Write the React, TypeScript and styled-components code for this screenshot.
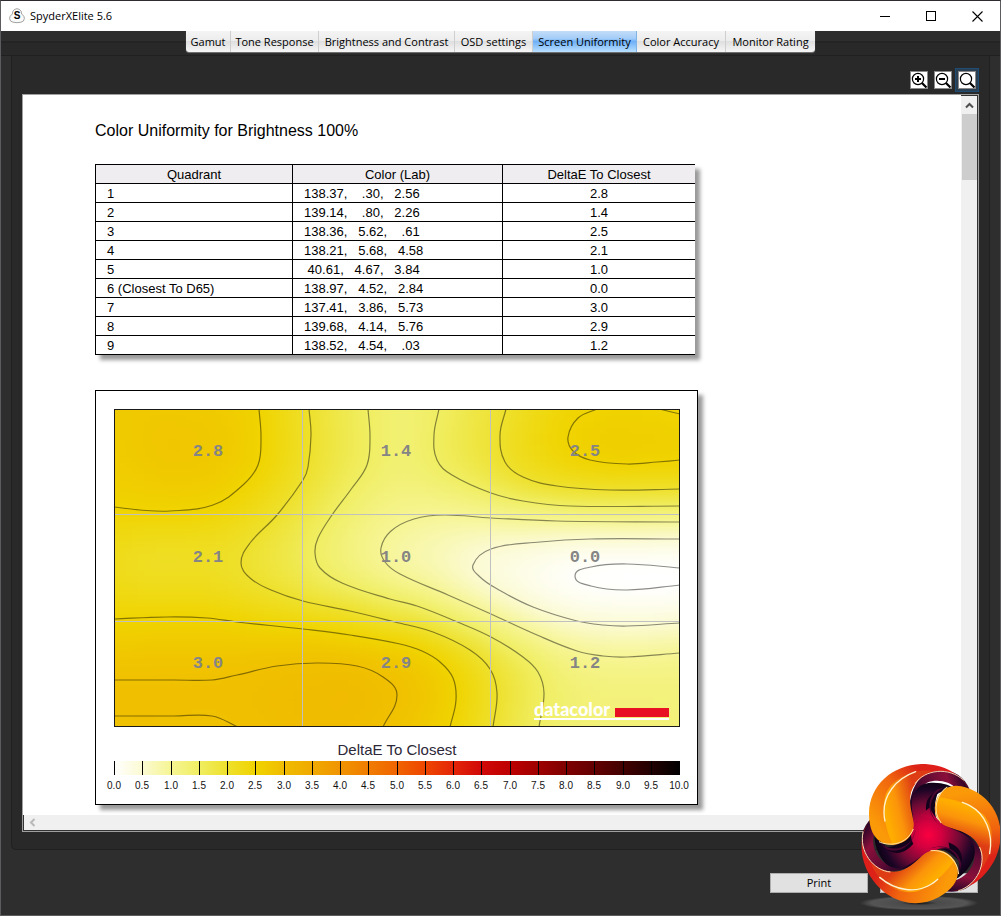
import React from "react";
import styled, { createGlobalStyle, css } from "styled-components";

const GlobalStyle = createGlobalStyle`
  *, *::before, *::after { box-sizing: border-box; }
  html, body { margin: 0; padding: 0; background: #2e2e2e; }
  button { font: inherit; color: inherit; padding: 0; margin: 0; cursor: default; }
`;

const uiFont = `"Open Sans", "Noto Sans", sans-serif`;
const docFont = `"Liberation Sans", Arial, sans-serif`;

/* ---------- window frame ---------- */

const Window = styled.div`
  position: relative;
  display: flex;
  flex-direction: column;
  min-height: 100vh;
  background: #2e2e2e;
  border: 1px solid #5c5c5e;
  border-top-color: #2f2b31;
  font-family: ${uiFont};
  font-size: 11px;
  color: #000;
  overflow: hidden;
`;

const TitleBar = styled.header`
  display: flex;
  align-items: center;
  height: 30px;
  padding-left: 8px;
  background: #fff;
`;

const AppName = styled.h1`
  flex: 1;
  margin: 0 0 0 5px;
  font-size: 11px;
  line-height: 16px;
  font-weight: 400;
`;

const CaptionButton = styled.button`
  display: flex;
  align-items: center;
  justify-content: center;
  width: 46px;
  height: 30px;
  border: 0;
  background: transparent;
`;

/* ---------- tabs ---------- */

const TabStrip = styled.nav`
  display: flex;
  justify-content: center;
  align-items: flex-start;
  height: 25px;
  background: linear-gradient(#2e2e2e 10px, #242424 10px, #242424 12px, #292929 12px, #292929 24px, #202020 24px);
`;

const TabGroup = styled.div`
  display: flex;
  height: 21px;
  border-radius: 0 0 3px 3px;
  overflow: hidden;
  box-shadow: 0 1px 1px #777;
`;

const Tab = styled.button<{ $width: number; $active?: boolean }>`
  width: ${(p) => p.$width}px;
  height: 21px;
  border: 0;
  border-right: 1px solid #cfcfcf;
  background: linear-gradient(#f4f4f4, #ededed 45%, #dfdfe0 50%, #f6f6f6);
  line-height: 21px;
  white-space: nowrap;
  &:last-child { border-right: 0; }
  ${(p) =>
    p.$active &&
    css`
      border-right-color: #7fb4e8;
      background: linear-gradient(#c3ddf8, #a5cdf8 35%, #6fb0f7 50%, #b9e0ff);
    `}
`;

/* ---------- report panel ---------- */

const Panel = styled.main`
  flex: 1;
  display: flex;
  flex-direction: column;
  margin: 0 10px;
  padding: 12px 10px 17px;
  background: #292929;
  border: 1px solid #202020;
  border-top: 0;
  border-radius: 0 0 5px 5px;
`;

const ZoomBar = styled.div`
  display: flex;
  justify-content: flex-end;
  height: 26px;
`;

const ZoomButton = styled.button<{ $active?: boolean }>`
  display: flex;
  align-items: center;
  justify-content: center;
  width: 24px;
  height: 24px;
  border: 1px solid ${(p) => (p.$active ? "#1f4c74" : "transparent")};
  background: ${(p) => (p.$active ? "#2b3f52" : "transparent")};
`;

const Viewport = styled.section`
  flex: 1;
  display: grid;
  grid-template-columns: 1fr 17px;
  grid-template-rows: 1fr 16px;
  border: 1px solid #a0a0a0;
  background: #fff;
`;

const Page = styled.article`
  padding: 26px 72px 9px;
  font-family: ${docFont};
  overflow: hidden;
`;

const VerticalScroll = styled.div`
  display: flex;
  flex-direction: column;
  align-items: center;
  background: #f0f0f0;
  border-top: 1px solid #333;
  border-right: 1px solid #333;
`;

const HorizontalScroll = styled.div`
  grid-column: 1 / -1;
  display: flex;
  align-items: center;
  padding-left: 5px;
  background: #f0f0f0;
  border: 1px solid #333;
  border-top: 0;
`;

const ScrollArrow = styled.div`
  display: flex;
  align-items: center;
  justify-content: center;
  height: 18px;
`;

const ScrollThumb = styled.div`
  align-self: stretch;
  height: 66px;
  margin-left: 1px;
  background: #cdcdcd;
`;

const Heading = styled.h2`
  margin: 0 0 23px;
  font-size: 16px;
  line-height: 20px;
  font-weight: 400;
`;

const ResultTable = styled.table`
  width: 100%;
  max-width: 600px;
  margin-bottom: 35px;
  table-layout: fixed;
  border-collapse: separate;
  border-spacing: 0;
  border-top: 1px solid #000;
  border-left: 1px solid #000;
  box-shadow: 5px 5px 4px rgba(0, 0, 0, 0.4);
  font-size: 13px;
  line-height: 17px;
`;

const Column = styled.col<{ $width: number }>`
  width: ${(p) => p.$width}px;
`;

const HeadCell = styled.th`
  padding: 1px 0 0;
  border-bottom: 1px solid #000;
  border-right: 1px solid #000;
  background: #efedef;
  font-weight: 400;
  &:last-child { border-right: 0; }
`;

const Cell = styled.td<{ $center?: boolean }>`
  padding: 1px 0 0 ${(p) => (p.$center ? 0 : 11)}px;
  border-bottom: 1px solid #000;
  border-right: 1px solid #000;
  background: #fff;
  text-align: ${(p) => (p.$center ? "center" : "left")};
  white-space: pre;
  &:last-child { border-right: 0; }
`;

const ChartCard = styled.figure`
  max-width: 603px;
  margin: 0;
  padding: 18px 17px 9px 18px;
  background: #fff;
  border: 1px solid #000;
  box-shadow: 5px 5px 4px rgba(0, 0, 0, 0.4);
`;

const ChartSvg = styled.svg`
  display: block;
  width: 100%;
  height: auto;
  overflow: visible;
`;

const LegendTitle = styled.figcaption`
  margin: 13px 0 1px;
  font-size: 15px;
  line-height: 20px;
  color: #2c2838;
  text-align: center;
`;

/* ---------- footer ---------- */

const Footer = styled.footer`
  display: flex;
  justify-content: flex-end;
  gap: 12px;
  padding: 23px 22px 22px;
`;

const ActionButton = styled.button`
  width: 98px;
  height: 20px;
  border: 1px solid #adadad;
  background: #e1e1e1;
  line-height: 18px;
`;

const Emblem = styled.svg`
  position: absolute;
  right: 0;
  bottom: 5px;
  width: 151px;
  height: 155px;
  pointer-events: none;
`;

/* ---------- data ---------- */

const tabs = [
  { label: "Gamut", width: 45 },
  { label: "Tone Response", width: 88 },
  { label: "Brightness and Contrast", width: 136 },
  { label: "OSD settings", width: 78 },
  { label: "Screen Uniformity", width: 104 },
  { label: "Color Accuracy", width: 89 },
  { label: "Monitor Rating", width: 89 },
];

const rows = [
  ["1", "138.37,    .30,   2.56", "2.8"],
  ["2", "139.14,    .80,   2.26", "1.4"],
  ["3", "138.36,   5.62,    .61", "2.5"],
  ["4", "138.21,   5.68,   4.58", "2.1"],
  ["5", " 40.61,   4.67,   3.84", "1.0"],
  ["6 (Closest To D65)", "138.97,   4.52,   2.84", "0.0"],
  ["7", "137.41,   3.86,   5.73", "3.0"],
  ["8", "139.68,   4.14,   5.76", "2.9"],
  ["9", "138.52,   4.54,    .03", "1.2"],
];

type Point = [number, number];
type Contour = { level: number; points: Point[] };

const W = 566;
const H = 318;

const contours: Contour[] = [
  { level: 2.5, points: [[145, 0], [147, 29], [144, 56], [129, 76], [99, 96], [56, 102], [26, 101], [0, 98]] },
  {
    level: 2,
    points: [[195, 0], [197, 26], [194, 58], [189, 71], [163, 106], [136, 134], [127, 154], [136, 169], [157, 181], [189, 192], [236, 202], [281, 213], [319, 223], [356, 241], [376, 260], [383, 284], [379, 318]],
  },
  {
    level: 1.5,
    points: [[254, 0], [256, 29], [253, 56], [238, 79], [218, 106], [204, 129], [201, 144], [206, 159], [228, 174], [276, 190], [303, 197], [341, 212], [377, 228], [409, 248], [424, 263], [430, 284], [425, 318]],
  },
  { level: 1.5, points: [[325, 0], [320, 26], [323, 51], [338, 66], [377, 84], [409, 92], [456, 97], [566, 97]] },
  { level: 2, points: [[392, 0], [386, 26], [391, 53], [409, 68], [443, 77], [496, 81], [566, 80]] },
  { level: 2.5, points: [[483, 0], [464, 9], [454, 28], [459, 42], [476, 51], [513, 55], [543, 53], [566, 51]] },
  { level: 2.5, points: [[545, 0], [566, 5]] },
  {
    level: 1,
    points: [[566, 113], [443, 112], [377, 109], [330, 106], [300, 110], [277, 122], [267, 139], [271, 153], [286, 165], [334, 186], [377, 205], [423, 226], [463, 242], [489, 247], [513, 248], [566, 244]],
  },
  {
    level: 0.5,
    points: [[566, 130], [476, 130], [426, 133], [377, 140], [359, 156], [366, 168], [385, 181], [419, 198], [463, 212], [489, 216], [513, 217], [566, 214]],
  },
  { level: 0.05, points: [[566, 159], [513, 155], [477, 158], [461, 167], [477, 177], [513, 181], [566, 176]] },
  {
    level: 2.5,
    points: [[0, 210], [53, 208], [93, 209], [123, 213], [189, 220], [236, 226], [286, 235], [308, 242], [326, 253], [339, 269], [342, 291], [336, 318]],
  },
  { level: 2.9, points: [[0, 271], [60, 271], [98, 271], [123, 266], [163, 257], [203, 254], [243, 257], [269, 268], [283, 286], [269, 318]] },
  { level: 2.9, points: [[0, 307], [60, 307], [98, 307], [124, 318]] },
];

const peaks: [number, number, number][] = [
  [94, 42, 2.75], [50, 30, 2.78], [10, 30, 2.7], [70, 0, 2.72],
  [94, 148, 2.1], [20, 150, 2.15], [50, 150, 2.1],
  [285, 42, 1.35], [288, 10, 1.35],
  [520, 25, 2.6], [60, 289, 2.93], [200, 290, 3], [230, 310, 3],
  [520, 290, 1.25], [560, 300, 1.25], [480, 300, 1.28], [520, 168, 0],
];

const quadrants = [
  { x: 94, y: 47, text: "2.8" },
  { x: 282, y: 47, text: "1.4" },
  { x: 471, y: 47, text: "2.5" },
  { x: 94, y: 153, text: "2.1" },
  { x: 282, y: 153, text: "1.0" },
  { x: 471, y: 153, text: "0.0" },
  { x: 94, y: 259, text: "3.0" },
  { x: 282, y: 259, text: "2.9" },
  { x: 471, y: 259, text: "1.2" },
];

/* One colour for each half step of DeltaE, 0.0 to 10.0. */
const scale: [number, number, number][] = [
  [255, 255, 255], [251, 250, 210], [246, 245, 148], [240, 238, 98], [238, 224, 44], [240, 212, 0],
  [240, 188, 0], [240, 170, 0], [240, 148, 0], [240, 124, 0], [240, 100, 0], [238, 70, 0],
  [228, 38, 8], [208, 8, 8], [190, 0, 0], [158, 0, 0], [126, 0, 0], [98, 0, 0],
  [66, 0, 0], [34, 0, 0], [0, 0, 0],
];

function colorFor(value: number): string {
  const t = Math.min(19.999, Math.max(0, value * 2));
  const i = Math.floor(t);
  const f = t - i;
  const c = scale[i].map((a, k) => Math.round(a + (scale[i + 1][k] - a) * f));
  return `rgb(${c.join(",")})`;
}

/* Smooth curve through all points of a contour. */
function curve(points: Point[]): string {
  const at = (i: number) => points[Math.max(0, Math.min(points.length - 1, i))];
  const tangent = (a: Point, c: Point): Point => {
    const l = Math.hypot(c[0] - a[0], c[1] - a[1]) || 1;
    return [(c[0] - a[0]) / l, (c[1] - a[1]) / l];
  };
  let d = `M${points[0][0]} ${points[0][1]}`;
  for (let i = 0; i < points.length - 1; i++) {
    const [a, b, c, e] = [at(i - 1), at(i), at(i + 1), at(i + 2)];
    const seg = Math.hypot(c[0] - b[0], c[1] - b[1]) * 0.38;
    const t1 = tangent(a, c);
    const t2 = tangent(b, e);
    d += `C${(b[0] + t1[0] * seg).toFixed(1)} ${(b[1] + t1[1] * seg).toFixed(1)} ${(c[0] - t2[0] * seg).toFixed(1)} ${(c[1] - t2[1] * seg).toFixed(1)} ${c[0]} ${c[1]}`;
  }
  return d;
}

/* Thin-plate spline through the contour points and the peaks. */
function buildField(): (x: number, y: number) => number {
  const s = 100;
  const samples = [
    ...contours.flatMap((c) => c.points.map(([x, y]) => [x / s, y / s, c.level])),
    ...peaks.map(([x, y, v]) => [x / s, y / s, v]),
  ];
  const n = samples.length;
  const kernel = (r2: number) => (r2 < 1e-9 ? 0 : 0.5 * r2 * Math.log(r2));
  const size = n + 3;
  const m: number[][] = Array.from({ length: size }, () => new Array(size + 1).fill(0));
  for (let i = 0; i < n; i++) {
    for (let j = 0; j < n; j++) {
      m[i][j] = kernel((samples[i][0] - samples[j][0]) ** 2 + (samples[i][1] - samples[j][1]) ** 2);
    }
    m[i][i] += 0.004;
    [1, samples[i][0], samples[i][1]].forEach((v, k) => {
      m[i][n + k] = v;
      m[n + k][i] = v;
    });
    m[i][size] = samples[i][2];
  }
  for (let c = 0; c < size; c++) {
    let p = c;
    for (let r = c + 1; r < size; r++) if (Math.abs(m[r][c]) > Math.abs(m[p][c])) p = r;
    [m[c], m[p]] = [m[p], m[c]];
    for (let r = c + 1; r < size; r++) {
      const f = m[r][c] / m[c][c];
      if (f !== 0) for (let k = c; k <= size; k++) m[r][k] -= f * m[c][k];
    }
  }
  const w = new Array(size).fill(0);
  for (let r = size - 1; r >= 0; r--) {
    let v = m[r][size];
    for (let k = r + 1; k < size; k++) v -= m[r][k] * w[k];
    w[r] = v / m[r][r];
  }
  return (px, py) => {
    const x = px / s;
    const y = py / s;
    let v = w[n] + w[n + 1] * x + w[n + 2] * y;
    for (let i = 0; i < n; i++) v += w[i] * kernel((x - samples[i][0]) ** 2 + (y - samples[i][1]) ** 2);
    return v;
  };
}

const CELL = 6;
const field = buildField();
const cells: { x: number; y: number; fill: string }[] = [];
for (let y = -12; y < H + 12; y += CELL) {
  for (let x = -12; x < W + 12; x += CELL) {
    const cx = Math.min(W, Math.max(0, x + CELL / 2));
    const cy = Math.min(H, Math.max(0, y + CELL / 2));
    cells.push({ x, y, fill: colorFor(field(cx, cy)) });
  }
}

/* ---------- drawings ---------- */

const UniformityMap = () => (
  <ChartSvg viewBox={`0 0 ${W} ${H}`} role="img" aria-label="Uniformity map">
    <defs>
      <clipPath id="plot-area">
        <rect width={W} height={H} />
      </clipPath>
      <filter id="soften" x="-5%" y="-5%" width="110%" height="110%" colorInterpolationFilters="sRGB">
        <feGaussianBlur stdDeviation="4" />
      </filter>
    </defs>
    <g clipPath="url(#plot-area)">
      <g filter="url(#soften)" shapeRendering="crispEdges">
        {cells.map((c, i) => (
          <rect key={i} x={c.x} y={c.y} width={CELL} height={CELL} fill={c.fill} />
        ))}
      </g>
      <g fill="none" stroke="#000" strokeOpacity="0.45" strokeWidth="1.2">
        {contours.map((c, i) => (
          <path key={i} d={curve(c.points)} />
        ))}
      </g>
      <path d="M188.5 0V318M376.5 0V318M0 105.5H566M0 212.5H566" stroke="#c0c0c0" fill="none" />
    </g>
    <g fill="#858585" fontFamily={`"Liberation Mono", monospace`} fontWeight="700" fontSize="17" textAnchor="middle">
      {quadrants.map((q) => (
        <text key={q.text} x={q.x} y={q.y}>
          {q.text}
        </text>
      ))}
    </g>
    <text x="420" y="307" fill="#fff" fontFamily="Lato, sans-serif" fontWeight="900" fontSize="18">
      datacolor
    </text>
    <rect x="420" y="309" width="135" height="2" fill="#fff" />
    <rect x="501" y="299" width="54" height="9" fill="#e81123" />
    <rect x="0.5" y="0.5" width={W - 1} height={H - 1} fill="none" stroke="#1a1a1a" />
  </ChartSvg>
);

const Legend = () => (
  <ChartSvg viewBox="0 0 566 34" role="img" aria-label="DeltaE colour scale">
    <defs>
      <linearGradient id="scale">
        {scale.map((c, i) => (
          <stop key={i} offset={i / 20} stopColor={`rgb(${c.join(",")})`} />
        ))}
      </linearGradient>
    </defs>
    <rect width="566" height="14" fill="url(#scale)" />
    {scale.map((_, i) => (
      <g key={i}>
        <rect x={Math.min(565, Math.round(i * 28.25))} y="0" width="1" height="14" fill="#000" />
        <text x={Math.round(i * 28.25)} y="28" textAnchor="middle" fontSize="10" fontFamily={docFont} fill="#111">
          {(i / 2).toFixed(1)}
        </text>
      </g>
    ))}
  </ChartSvg>
);

const Magnifier = ({ sign }: { sign?: "+" | "-" }) => (
  <svg width="18" height="18" viewBox="0 0 18 18">
    <rect x="0.5" y="0.5" width="17" height="17" fill="#fff" stroke="#8a8a8a" />
    <circle cx="8" cy="8" r="5.6" fill="none" stroke="#000" strokeWidth="1.2" />
    <path d="M12 12L16.5 16.5" stroke="#000" strokeWidth="2.2" />
    {sign && <path d={sign === "+" ? "M5 8h6M8 5v6" : "M5 8h6"} stroke="#000" strokeWidth="2" />}
  </svg>
);

const AppIcon = () => (
  <svg width="16" height="16" viewBox="0 0 16 16" aria-hidden="true">
    <path
      d="M5.5 1.5Q8 -0.2 10.5 1.5Q12.6 2.7 12.7 6Q15.6 8 15.4 10.6Q15 13.8 12 14.2Q8 15.2 4 14.2Q1 13.8 0.6 10.6Q0.4 8 3.3 6Q3.4 2.7 5.5 1.5Z"
      fill="#fafafa"
      stroke="#999"
      strokeWidth="0.9"
    />
    <text x="8" y="11" textAnchor="middle" fontFamily={docFont} fontWeight="700" fontSize="10">
      S
    </text>
  </svg>
);

const turns = ["rotate(0)", "rotate(120 240 237)", "translate(-6 2) rotate(240 240 237)"];

const SwirlEmblem = () => (
  <Emblem viewBox="0 0 453 465" aria-hidden="true">
    <defs>
      <radialGradient id="core" gradientUnits="userSpaceOnUse" cx="238" cy="240" r="160">
        <stop offset="0" stopColor="#fb0040" />
        <stop offset="0.25" stopColor="#d3003f" />
        <stop offset="0.6" stopColor="#6d0a34" />
        <stop offset="0.85" stopColor="#1c0526" />
        <stop offset="1" stopColor="#0c0214" />
      </radialGradient>
      <linearGradient id="band" gradientUnits="userSpaceOnUse" x1="185" y1="150" x2="360" y2="90">
        <stop offset="0" stopColor="#1a0424" />
        <stop offset="0.35" stopColor="#5e0b34" />
        <stop offset="0.7" stopColor="#8a0f3a" />
        <stop offset="1" stopColor="#1a0424" />
      </linearGradient>
      <linearGradient id="shell" gradientUnits="userSpaceOnUse" x1="80" y1="210" x2="290" y2="40">
        <stop offset="0" stopColor="#fb9a08" />
        <stop offset="0.45" stopColor="#f0640e" />
        <stop offset="0.75" stopColor="#dc2417" />
        <stop offset="1" stopColor="#e01b1b" />
      </linearGradient>
      <linearGradient id="facet" gradientUnits="userSpaceOnUse" x1="110" y1="175" x2="208" y2="150">
        <stop offset="0" stopColor="#ffae00" />
        <stop offset="0.4" stopColor="#fb940a" />
        <stop offset="1" stopColor="#de3c14" />
      </linearGradient>
      <radialGradient id="ground">
        <stop offset="0" stopColor="#111" />
        <stop offset="0.3" stopColor="#4a4a4a" />
        <stop offset="0.8" stopColor="#555" />
        <stop offset="1" stopColor="#555" stopOpacity="0" />
      </radialGradient>
    </defs>
    <ellipse cx="210" cy="444" rx="178" ry="22" fill="url(#ground)" />
    {turns.map((turn) => (
      <g key={turn} transform={turn}>
        <path
          d="M178 230C172 90 215 40 285 46C330 50 356 80 368 120C345 106 335 106 325 104C300 76 262 72 234 83C205 100 192 140 200 230Z"
          fill="url(#band)"
        />
        <path
          d="M170 275C196 240 195 210 190 170C184 122 200 90 238 84C275 80 305 90 325 106C285 104 258 112 250 140C238 180 262 215 310 240L240 300Z"
          fill="url(#core)"
        />
        <path d="M268 108C228 122 222 160 242 200C254 216 270 226 290 232C262 206 246 170 268 108Z" fill="#12021c" />
      </g>
    ))}
    <circle cx="238" cy="240" r="52" fill="url(#core)" />
    {turns.map((turn) => (
      <g key={turn} transform={turn}>
        <path d="M92 264C130 296 190 282 200 222C196 262 160 300 112 282Z" fill="#4a0830" />
        <path
          d="M368 116C338 56 285 27 217 27C130 30 62 90 60 175C60 235 84 268 130 270C172 268 196 238 194 205C190 170 178 150 186 112C200 68 245 44 287 48C326 54 350 78 368 116Z"
          fill="url(#shell)"
        />
        <path
          d="M250 48C190 40 125 70 108 125C98 175 112 225 130 267C172 264 195 236 192 205C187 170 175 150 185 110C196 78 222 56 250 48Z"
          fill="url(#facet)"
        />
        <path d="M200 50C138 72 104 122 105 172Q105 186 108 198" fill="none" stroke="#fff3cf" strokeWidth="4" strokeLinecap="round" />
        <path d="M90 260C118 274 172 272 193 222" fill="none" stroke="#ffe3a0" strokeWidth="3" />
        <path d="M198 86C226 44 300 34 344 76" fill="none" stroke="#fff0c0" strokeWidth="2.5" />
      </g>
    ))}
  </Emblem>
);

/* ---------- application ---------- */

export default function App() {
  return (
    <>
      <GlobalStyle />
      <Window>
        <TitleBar>
          <AppIcon />
          <AppName>SpyderXElite 5.6</AppName>
          <CaptionButton aria-label="Minimize">
            <svg width="11" height="11"><path d="M0 5.5H10" stroke="#000" /></svg>
          </CaptionButton>
          <CaptionButton aria-label="Maximize">
            <svg width="11" height="11"><rect x="0.5" y="0.5" width="9" height="9" fill="none" stroke="#000" /></svg>
          </CaptionButton>
          <CaptionButton aria-label="Close window">
            <svg width="11" height="11"><path d="M0.5 0.5L10.5 10.5M10.5 0.5L0.5 10.5" stroke="#000" strokeWidth="1.1" /></svg>
          </CaptionButton>
        </TitleBar>
        <TabStrip>
          <TabGroup>
            {tabs.map((t) => (
              <Tab key={t.label} $width={t.width} $active={t.label === "Screen Uniformity"}>
                {t.label}
              </Tab>
            ))}
          </TabGroup>
        </TabStrip>
        <Panel>
          <ZoomBar>
            <ZoomButton aria-label="Zoom in"><Magnifier sign="+" /></ZoomButton>
            <ZoomButton aria-label="Zoom out"><Magnifier sign="-" /></ZoomButton>
            <ZoomButton aria-label="Fit" $active><Magnifier /></ZoomButton>
          </ZoomBar>
          <Viewport>
            <Page>
              <Heading>Color Uniformity for Brightness 100%</Heading>
              <ResultTable>
                <colgroup>
                  <Column $width={197} />
                  <Column $width={210} />
                  <col />
                </colgroup>
                <thead>
                  <tr>
                    <HeadCell scope="col">Quadrant</HeadCell>
                    <HeadCell scope="col">Color (Lab)</HeadCell>
                    <HeadCell scope="col">DeltaE To Closest</HeadCell>
                  </tr>
                </thead>
                <tbody>
                  {rows.map(([quadrant, lab, delta]) => (
                    <tr key={quadrant}>
                      <Cell>{quadrant}</Cell>
                      <Cell>{lab}</Cell>
                      <Cell $center>{delta}</Cell>
                    </tr>
                  ))}
                </tbody>
              </ResultTable>
              <ChartCard>
                <UniformityMap />
                <LegendTitle>DeltaE To Closest</LegendTitle>
                <Legend />
              </ChartCard>
            </Page>
            <VerticalScroll>
              <ScrollArrow>
                <svg width="9" height="7"><path d="M1 5.5L4.5 2L8 5.5" fill="none" stroke="#505050" strokeWidth="2" /></svg>
              </ScrollArrow>
              <ScrollThumb />
            </VerticalScroll>
            <HorizontalScroll>
              <svg width="7" height="9"><path d="M5.5 1L2 4.5L5.5 8" fill="none" stroke="#b8b8b8" strokeWidth="2" /></svg>
            </HorizontalScroll>
          </Viewport>
        </Panel>
        <Footer>
          <ActionButton>Print</ActionButton>
          <ActionButton aria-label="Close" />
        </Footer>
        <SwirlEmblem />
      </Window>
    </>
  );
}
